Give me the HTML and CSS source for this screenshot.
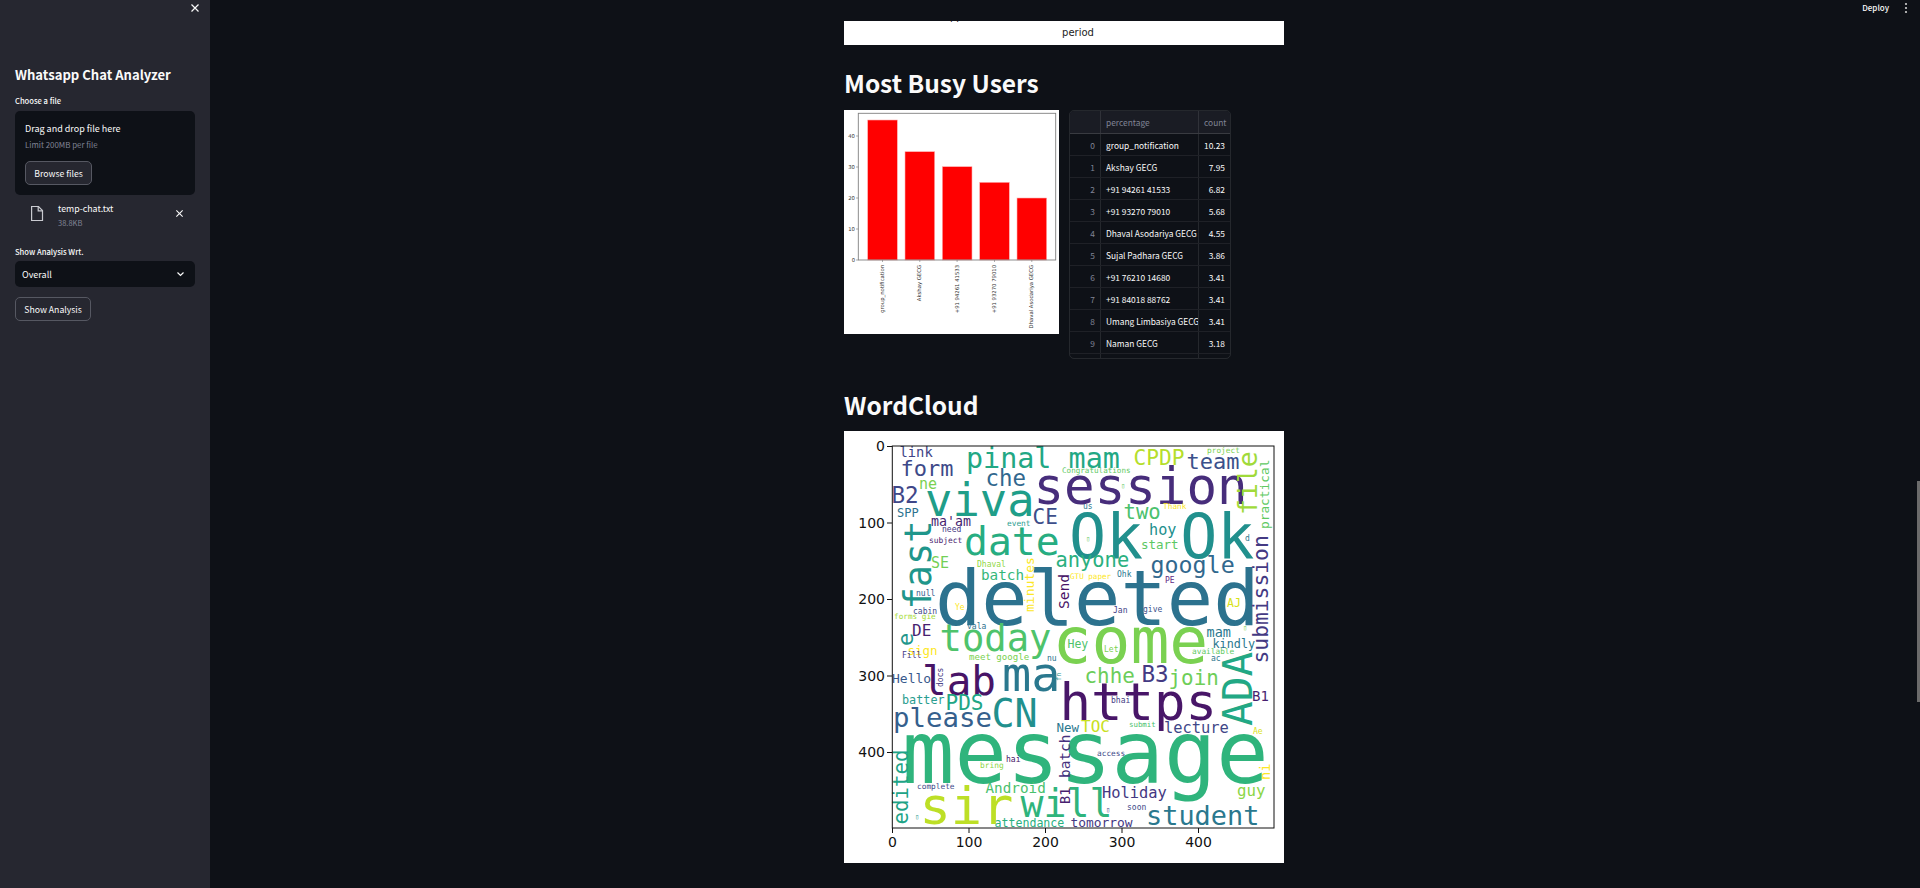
FILE: index.html
```html
<!DOCTYPE html>
<html lang="en">
<head>
<meta charset="utf-8">
<title>Whatsapp Chat Analyzer</title>
<link rel="stylesheet" href="styles.css">
</head>
<body>
<div class="app">
  <aside class="sidebar">
    <div class="side-close">
      <svg width="10" height="10" viewBox="0 0 10 10"><path d="M1.5 1.5l7 7M8.5 1.5l-7 7" class="ico"/></svg>
    </div>
    <h2 class="side-title">Whatsapp Chat Analyzer</h2>
    <label class="lbl">Choose a file</label>
    <div class="drop">
      <div class="drop-main">Drag and drop file here</div>
      <div class="drop-sub">Limit 200MB per file</div>
      <button class="btn">Browse files</button>
    </div>
    <div class="file">
      <svg class="file-ico" width="14" height="17" viewBox="0 0 14 17"><path d="M1.6 1.5h6.9l4 4v10h-10.900z" class="ico-file"/><path d="M8.2 1.500v4.300h4.300" class="ico-file"/></svg>
      <div class="file-info">
        <div class="file-name">temp-chat.txt</div>
        <div class="file-size">38.8KB</div>
      </div>
      <svg class="file-x" width="9" height="9" viewBox="0 0 10 10"><path d="M1.500 1.500l7 7M8.500 1.500l-7 7" class="ico"/></svg>
    </div>
    <label class="lbl lbl-b">Show Analysis Wrt.</label>
    <div class="select">
      <span>Overall</span>
      <svg width="9" height="6" viewBox="0 0 9 6"><path d="M1.500 1.500l3 3 3-3" class="ico"/></svg>
    </div>
    <button class="btn btn-b">Show Analysis</button>
  </aside>

  <main class="main">
    <div class="top-actions">
      <span class="deploy">Deploy</span>
      <svg width="4" height="12" viewBox="0 0 4 12"><circle cx="2" cy="2" r="1.100"/><circle cx="2" cy="6" r="1.100"/><circle cx="2" cy="10" r="1.100"/></svg>
    </div>
    <div class="scrollbar"></div>

    <div class="content">
      <div class="crop">
        <svg class="crop-svg" width="440" height="24" viewBox="0 0 440 24">
          <text x="106" y="-1" class="crop-frag">pp  ,  ,  ,  ,  ,</text>
          <text x="234" y="15" class="period" text-anchor="middle">period</text>
        </svg>
      </div>

      <h1 class="head head-a">Most Busy Users</h1>

      <div class="cols">
        <svg class="bars" width="215" height="224" viewBox="0 0 215 224">
          <rect width="215" height="224" fill="#fff"/>
          <g fill="#ff0000" stroke="#ffb0b0" stroke-width=".6">
            <rect x="23.700" y="10" width="29.600" height="140"/>
            <rect x="61" y="41.700" width="29.700" height="108.300"/>
            <rect x="98.300" y="56.700" width="29.700" height="93.300"/>
            <rect x="135.700" y="72.300" width="29.600" height="77.700"/>
            <rect x="173" y="88" width="29.700" height="62"/>
          </g>
          <rect x="14.300" y="3.300" width="197.400" height="146.700" fill="none" stroke="#808080" stroke-width=".9"/>
          <g stroke="#777" stroke-width=".6">
            <path d="M12 150h2.300M12 119h2.300M12 88h2.300M12 57h2.300M12 26h2.300"/>
            <path d="M38.500 150v2M75.800 150v2M113.100 150v2M150.500 150v2M187.800 150v2"/>
          </g>
          <g class="bar-tick" text-anchor="end">
            <text x="11" y="152">0</text>
            <text x="11" y="121">10</text>
            <text x="11" y="90">20</text>
            <text x="11" y="59">30</text>
            <text x="11" y="28">40</text>
          </g>
          <g class="bar-tick" text-anchor="end">
            <text transform="translate(40 155) rotate(-90)">group_notification</text>
            <text transform="translate(77.300 155) rotate(-90)">Akshay GECG</text>
            <text transform="translate(114.600 155) rotate(-90)">+91 94261 41533</text>
            <text transform="translate(152 155) rotate(-90)">+91 93270 79010</text>
            <text transform="translate(189.300 155) rotate(-90)">Dhaval Asodariya GECG</text>
          </g>
        </svg>

        <div class="table">
          <div class="row row-h"><div class="c c-i"></div><div class="c c-n">percentage</div><div class="c c-v c-vh">count</div></div>
          <div class="row"><div class="c c-i">0</div><div class="c c-n">group_notification</div><div class="c c-v">10.23</div></div>
          <div class="row"><div class="c c-i">1</div><div class="c c-n">Akshay GECG</div><div class="c c-v">7.95</div></div>
          <div class="row"><div class="c c-i">2</div><div class="c c-n">+91 94261 41533</div><div class="c c-v">6.82</div></div>
          <div class="row"><div class="c c-i">3</div><div class="c c-n">+91 93270 79010</div><div class="c c-v">5.68</div></div>
          <div class="row"><div class="c c-i">4</div><div class="c c-n">Dhaval Asodariya GECG</div><div class="c c-v">4.55</div></div>
          <div class="row"><div class="c c-i">5</div><div class="c c-n">Sujal Padhara GECG</div><div class="c c-v">3.86</div></div>
          <div class="row"><div class="c c-i">6</div><div class="c c-n">+91 76210 14680</div><div class="c c-v">3.41</div></div>
          <div class="row"><div class="c c-i">7</div><div class="c c-n">+91 84018 88762</div><div class="c c-v">3.41</div></div>
          <div class="row"><div class="c c-i">8</div><div class="c c-n">Umang Limbasiya GECG</div><div class="c c-v">3.41</div></div>
          <div class="row"><div class="c c-i">9</div><div class="c c-n">Naman GECG</div><div class="c c-v">3.18</div></div>
          <div class="row row-e"><div class="c c-i"></div><div class="c c-n"></div><div class="c c-v"></div></div>
        </div>
      </div>

      <h1 class="head head-b">WordCloud</h1>

      <svg class="cloud" width="440" height="432" viewBox="0 0 440 432">
        <rect width="440" height="432" fill="#fff"/>
        <g class="w">
          <text x="91" y="194" font-size="77" fill="#2c728e">deleted</text>
          <text x="189.500" y="73" font-size="50.800" fill="#472d7b">session</text>
          <text x="225" y="127" font-size="61.600" fill="#21908d">Ok Ok</text>
          <text x="81" y="85" font-size="45.500" fill="#1f9e89">viva</text>
          <text x="122" y="37" font-size="28.400" fill="#22a884">pinal mam</text>
          <text x="289.500" y="34" font-size="21.200" fill="#b5de2b">CPDP</text>
          <text x="342.500" y="38" font-size="22" fill="#3b518b">team</text>
          <text transform="translate(413 84) rotate(-90)" font-size="26.500" fill="#a0da39">file</text>
          <text transform="translate(425 98) rotate(-90)" font-size="12.800" fill="#5ec962">practical</text>
          <text x="55.500" y="26" font-size="13.800" fill="#414487">link</text>
          <text x="56.500" y="45" font-size="22" fill="#3e4a89">form</text>
          <text x="141.500" y="55" font-size="22.400" fill="#31688e">che</text>
          <text x="75" y="58" font-size="15" fill="#7ad151">ne</text>
          <text x="47.400" y="72" font-size="22.600" fill="#3f4788">B2</text>
          <text x="53" y="86" font-size="12" fill="#2c728e">SPP</text>
          <text x="87" y="95" font-size="13.300" fill="#481f70">ma'am</text>
          <text x="98" y="101" font-size="8" fill="#443983">need</text>
          <text x="85" y="112" font-size="7.900" fill="#481b6d">subject</text>
          <text transform="translate(87 178.500) rotate(-90)" font-size="37" fill="#1f968b">fast</text>
          <text x="120" y="124" font-size="39.700" fill="#27ad81">date</text>
          <text x="188.500" y="93" font-size="21" fill="#3d4e8a">CE</text>
          <text x="279.500" y="88" font-size="20.600" fill="#4ac16d">two</text>
          <text x="305" y="104" font-size="15.200" fill="#218f8d">hoy</text>
          <text x="297" y="118" font-size="12.500" fill="#5cc863">start</text>
          <text x="87" y="137" font-size="15" fill="#73d056">SE</text>
          <text x="211.500" y="136" font-size="20.400" fill="#2ab07f">anyone</text>
          <text x="306.500" y="142" font-size="23.300" fill="#31688e">google</text>
          <text x="137" y="149" font-size="14.300" fill="#35b779">batch</text>
          <text transform="translate(190 181) rotate(-90)" font-size="13" fill="#fde725">minutes</text>
          <text transform="translate(225 178) rotate(-90)" font-size="14.600" fill="#481467">Send</text>
          <text transform="translate(424 232.500) rotate(-90)" font-size="21.300" fill="#443a83">submission</text>
          <text x="133" y="136" font-size="8" fill="#8fd744">Dhaval</text>
          <text x="226" y="148" font-size="7.600" fill="#fde725">GTU paper</text>
          <text x="273" y="146" font-size="8" fill="#2a788e">Ohk</text>
          <text x="321" y="152" font-size="8" fill="#5e2a83">PE</text>
          <text x="72" y="165" font-size="8" fill="#38598c">null</text>
          <text x="111" y="179" font-size="8" fill="#fde725">Ye</text>
          <text x="383" y="176" font-size="11.500" fill="#d8e219">AJ</text>
          <text x="69" y="183" font-size="8" fill="#3e4989">cabin</text>
          <text x="50" y="188" font-size="7.700" fill="#a5db36">forms gie</text>
          <text x="269" y="182" font-size="8" fill="#433e85">Jan</text>
          <text x="299" y="181" font-size="8" fill="#3b528b">give</text>
          <text x="123" y="198" font-size="8" fill="#2c728e">vala</text>
          <text x="68" y="205" font-size="16" fill="#481f70">DE</text>
          <text transform="translate(69 215) rotate(-90)" font-size="22" fill="#1f968b">e</text>
          <text x="95.500" y="220" font-size="37.200" fill="#4ec36b">today</text>
          <text x="208.500" y="232" font-size="64.700" fill="#7ad151">come</text>
          <text x="223.500" y="217" font-size="11.500" fill="#4ec36b">Hey</text>
          <text x="260" y="221" font-size="8" fill="#7ad151">Let</text>
          <text x="362.500" y="206" font-size="13.500" fill="#2a788e">mam</text>
          <text x="368.500" y="217" font-size="11.800" fill="#2a788e">kindly</text>
          <text x="348" y="223" font-size="7.800" fill="#5ec962">available</text>
          <text x="63.500" y="224" font-size="12.500" fill="#fde725">sign</text>
          <text x="58" y="227" font-size="8" fill="#443983">Fill</text>
          <text x="125" y="229" font-size="9.100" fill="#7ad151">meet google</text>
          <text x="203" y="230" font-size="8" fill="#2c728e">nu</text>
          <text x="367" y="230" font-size="8" fill="#2a788e">ac</text>
          <text x="78" y="264" font-size="41" fill="#481467">lab</text>
          <text x="158" y="260" font-size="48.600" fill="#2a788e">ma</text>
          <text x="215.500" y="289" font-size="52.300" fill="#481668">https</text>
          <text x="240.500" y="252" font-size="20.900" fill="#6ccd5a">chhe</text>
          <text x="297.500" y="251" font-size="22.600" fill="#443a83">B3</text>
          <text x="324.500" y="254" font-size="20.900" fill="#6ece58">join</text>
          <text transform="translate(408 295) rotate(-90)" font-size="41.200" fill="#22a884">ADA</text>
          <text x="408" y="270" font-size="14" fill="#481f70">B1</text>
          <text x="48" y="252" font-size="13" fill="#38598c">Hello</text>
          <text transform="translate(99 256) rotate(-90)" font-size="8" fill="#443a83">docs</text>
          <text x="58" y="273" font-size="11.800" fill="#2a9d8f">batter</text>
          <text x="101.500" y="279" font-size="21" fill="#21a685">PDS</text>
          <text x="49" y="296" font-size="27.400" fill="#35608d">please</text>
          <text x="147.500" y="296" font-size="38.400" fill="#21908d">CN</text>
          <text x="212.500" y="301" font-size="12.500" fill="#2a788e">New</text>
          <text x="237" y="301" font-size="16" fill="#c8e020">TOC</text>
          <text x="267" y="272" font-size="8" fill="#443983">bhai</text>
          <text transform="translate(217 250) rotate(-90)" font-size="7" fill="#21908d">fn</text>
          <text x="285" y="296" font-size="7.400" fill="#4ac16d">submit</text>
          <text x="320" y="302" font-size="15.400" fill="#3f4788">lecture</text>
          <text x="409" y="303" font-size="8" fill="#d8e219">Ae</text>
          <text x="58" y="352" font-size="87" fill="#2fb47c">message</text>
          <text transform="translate(64 393.500) rotate(-90)" font-size="20.800" fill="#20a386">edited</text>
          <text transform="translate(226 347) rotate(-90)" font-size="14.400" fill="#46327e">batch</text>
          <text x="162" y="331" font-size="8" fill="#471365">hai</text>
          <text x="253" y="325" font-size="7.800" fill="#3e4989">access</text>
          <text x="136" y="337" font-size="7.900" fill="#8bd646">bring</text>
          <text transform="translate(426 349) rotate(-90)" font-size="13.500" fill="#fde725">ni</text>
          <text x="73" y="358" font-size="7.800" fill="#3e4989">complete</text>
          <text x="141.500" y="362" font-size="14.300" fill="#4ac16d">Android</text>
          <text x="258" y="367" font-size="15.400" fill="#443983">Holiday</text>
          <text x="393" y="365" font-size="15.800" fill="#8bd646">guy</text>
          <text x="75.500" y="393" font-size="52" fill="#bddf26">sir</text>
          <text x="176.500" y="386" font-size="38.200" fill="#2fb47c">will</text>
          <text transform="translate(226 373) rotate(-90)" font-size="13.500" fill="#481f70">B1</text>
          <text x="302" y="394" font-size="26.900" fill="#2a788e">student</text>
          <text x="150.500" y="396" font-size="11.600" fill="#2ab07f">attendance</text>
          <text x="226.500" y="396" font-size="12.900" fill="#443983">tomorrow</text>
          <text x="283" y="379" font-size="8" fill="#3e4989">soon</text>
          <text x="363" y="22" font-size="7.800" fill="#7ad151">project</text>
          <text x="218" y="42" font-size="7.600" fill="#5ec962">Congratulations</text>
          <text x="239" y="78" font-size="8" fill="#2a788e">us</text>
          <text x="319" y="78" font-size="7.800" fill="#fde725">Thank</text>
          <text x="163" y="95" font-size="7.800" fill="#2a9d8f">event</text>
          <text x="401" y="110" font-size="8" fill="#2a788e">d</text>
          <text x="277" y="57" font-size="7" fill="#5ec962">▯</text>
          <text x="242" y="110" font-size="7" fill="#5ec962">▯</text>
          <text x="399" y="199" font-size="7" fill="#7ad151">▯</text>
          <text x="71" y="388" font-size="7" fill="#2a9d8f">▯</text>
          <text x="262" y="381" font-size="7" fill="#3e4989">▯</text>
        </g>
        <rect x="48.300" y="15" width="381.700" height="382" fill="none" stroke="#111" stroke-width="1"/>
        <g stroke="#111" stroke-width="1">
          <path d="M43 15.500h5M43 92h5M43 168.500h5M43 245h5M43 321.500h5"/>
          <path d="M48.500 397v5M125 397v5M201.500 397v5M278 397v5M354.500 397v5"/>
        </g>
        <g class="ax" text-anchor="end">
          <text x="41" y="20">0</text>
          <text x="41" y="97">100</text>
          <text x="41" y="173">200</text>
          <text x="41" y="250">300</text>
          <text x="41" y="326">400</text>
        </g>
        <g class="ax" text-anchor="middle">
          <text x="48.500" y="416">0</text>
          <text x="125" y="416">100</text>
          <text x="201.500" y="416">200</text>
          <text x="278" y="416">300</text>
          <text x="354.500" y="416">400</text>
        </g>
      </svg>
    </div>
  </main>
</div>
</body>
</html>
```

FILE: styles.css
```css
* { box-sizing: border-box; }
html, body { margin: 0; height: 888px; overflow: hidden; background: #0e1117; }
body { font-family: "Noto Sans CJK SC", "Lato", sans-serif; color: #fafafa; }
.app { display: flex; height: 888px; overflow: hidden; }

.sidebar { width: 210px; flex: none; background: #262730; padding: 0 15px; height: 888px; }
.side-close { display: flex; justify-content: flex-end; margin-right: -5px; padding-top: 3px; height: 13px; }
.ico { fill: none; stroke: #fafafa; stroke-width: 1.200; }
.side-title { margin: 49px 0 0; font-size: 13.100px; line-height: 26px; font-weight: 700; height: 26px; white-space: nowrap; }
.lbl { display: block; font-size: 7.600px; line-height: 13px; margin-top: 6px; height: 13px; font-weight: 500; white-space: nowrap; }
.drop { margin-top: 4px; height: 84px; background: #0e1117; border-radius: 5px; padding: 11px 10px 0; }
.drop-main { font-size: 9px; line-height: 13px; }
.drop-sub { font-size: 7.900px; line-height: 12px; margin-top: 4px; color: #808495; }
.btn { display: block; font-family: inherit; color: #fafafa; background: #262730; border: 1px solid #565862; border-radius: 5px; font-size: 8.700px; line-height: 13px; padding: 0; }
.drop .btn { width: 67px; height: 24px; margin-top: 10px; }
.file { display: flex; align-items: flex-start; height: 41px; padding: 8px 0 0 15px; }
.file-ico { margin-top: 2px; flex: none; }
.ico-file { fill: none; stroke: #c9cad0; stroke-width: 1.200; }
.file-info { margin-left: 14px; flex: 1; }
.file-name { font-size: 8.800px; line-height: 12px; }
.file-size { font-size: 7.500px; line-height: 12px; margin-top: 2px; color: #808495; }
.file-x { margin: 6px 11px 0 0; flex: none; }
.lbl-b { margin-top: 9px; }
.select { margin-top: 3px; height: 26px; background: #0e1117; border-radius: 5px; display: flex; justify-content: space-between; align-items: center; padding: 0 10px 0 7px; font-size: 9px; }
.btn-b { width: 76px; height: 24px; margin-top: 10px; background: transparent; }

.main { flex: 1; min-width: 0; position: relative; height: 888px; overflow: hidden; padding-right: 2px; }
.top-actions { position: absolute; top: 2px; right: 12px; display: flex; align-items: center; gap: 15px; height: 12px; }
.top-actions svg { fill: #d0d0d0; }
.deploy { font-size: 8px; font-weight: 500; line-height: 12px; }
.scrollbar { position: absolute; right: 0; top: 481px; width: 3px; height: 221px; background: #6b6b6b; }

.content { width: 440px; margin: 0 auto; padding-top: 21px; }
.crop { height: 24px; background: #fff; overflow: hidden; }
.crop-svg { display: block; }
.crop-frag { font: 10px "DejaVu Sans", sans-serif; fill: #222; }
.period { font: 10px "DejaVu Sans", sans-serif; fill: #222; }
.head { margin: 0; font-size: 24.500px; line-height: 30px; font-weight: 700; color: #fafafa; height: 30px; }
.head-a { margin-top: 23px; }
.head-b { margin-top: 31px; }
.cols { display: flex; gap: 10px; align-items: flex-start; margin-top: 12px; }
.bars { display: block; flex: none; }
.bar-tick { font: 5.300px "DejaVu Sans", sans-serif; fill: #333; }

.table { width: 162px; height: 249px; border: 1px solid rgba(250,250,250,.1); border-radius: 5px; overflow: hidden; font-size: 8.400px; }
.row { display: grid; grid-template-columns: 31px 98px 1fr; height: 22px; border-bottom: 1px solid rgba(250,250,250,.07); }
.row-h { height: 23px; background: #1a1c24; border-bottom-color: rgba(250,250,250,.14); color: #808495; }
.row-e { border-bottom: 0; height: 8px; }
.c { display: flex; align-items: center; border-right: 1px solid rgba(250,250,250,.1); padding: 0 5px; white-space: nowrap; overflow: hidden; }
.c-i { justify-content: flex-end; color: #808495; }
.c-v { justify-content: flex-end; border-right: 0; }
.c-vh { justify-content: flex-start; padding: 0 0 0 5px; }

.cloud { display: block; margin-top: 11px; }
.w text { font-family: "DejaVu Sans Mono", monospace; }
.ax { font: 14px "DejaVu Sans", sans-serif; fill: #111; }
```
